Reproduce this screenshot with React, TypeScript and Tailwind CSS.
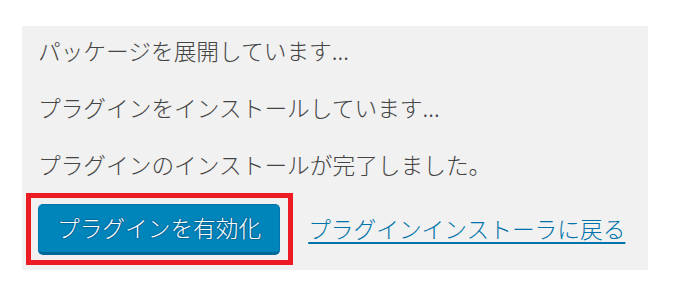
import React from 'react';

const font = { fontFamily: '"Noto Sans CJK JP", "Noto Sans", sans-serif' };

const App: React.FC = () => {
  return (
    <div className="w-[675px] h-[304px] bg-white pt-[26px] pl-[22px]" style={font}>
      <div className="w-[626px] bg-[#f1f1f1] px-4 pt-2 pb-[5px] text-[#444444] text-[22.7px] font-light">
        {/* Progress messages */}
        <p className="leading-[34px] mb-[23px]">パッケージを展開しています...</p>
        <p className="leading-[34px] mb-[23px]">プラグインをインストールしています...</p>
        <p className="leading-[34px] mb-[11px]">プラグインのインストールが完了しました。</p>

        {/* Actions */}
        <div className="flex items-center -ml-3">
          <div className="border-[5px] border-[#ed1c24] pt-[6px] pb-[5px] pl-[7px] pr-[8px]">
            <button className="h-[51px] px-[18px] rounded-[5px] bg-[#0085ba] border border-[#0073aa] border-b-[3px] border-b-[#006799] text-white text-[22.7px] font-light leading-none [text-shadow:0_-1px_1px_#006799,1px_0_1px_#006799,0_1px_1px_#006799,-1px_0_1px_#006799]">
              プラグインを有効化
            </button>
          </div>
          <a href="#" className="ml-[15px] text-[#0073aa] underline decoration-[2px] underline-offset-[4px]">
            プラグインインストーラに戻る
          </a>
        </div>
      </div>
    </div>
  );
};

export default App;
